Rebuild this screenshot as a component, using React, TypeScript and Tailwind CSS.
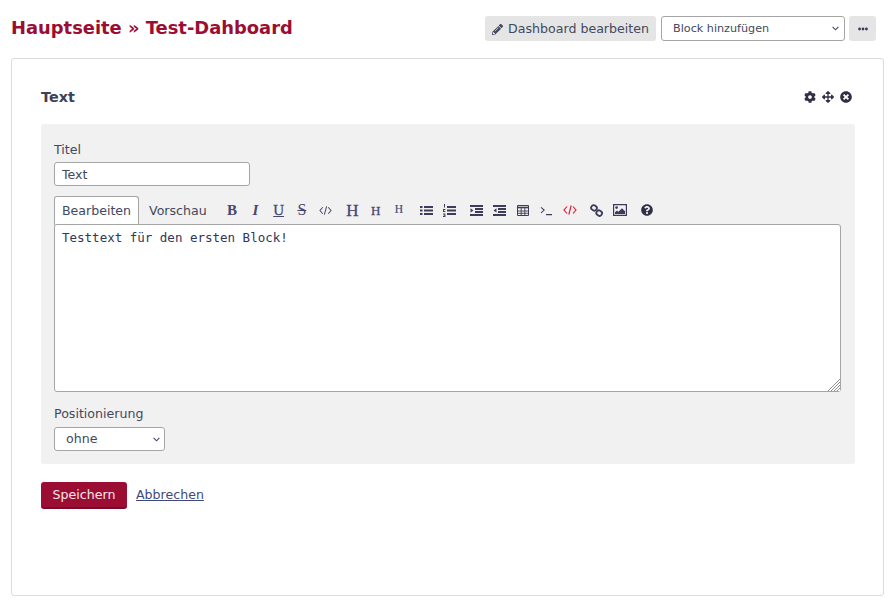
import React from "react";
import { FaCog, FaArrowsAlt, FaTimesCircle, FaEllipsisH, FaPencilAlt, FaQuestionCircle } from "react-icons/fa";

const Cell = ({ children }: { children: React.ReactNode }) => (
  <span className="w-[23.25px] h-[24px] flex items-center justify-center">{children}</span>
);

const Letter = ({ className, children }: { className: string; children: React.ReactNode }) => (
  <span className={`font-['Liberation_Serif',serif] leading-none text-[#474771] ${className}`}>{children}</span>
);

const Chevron = ({ className }: { className: string }) => (
  <svg viewBox="0 0 8 5" className={`absolute pointer-events-none w-[7px] h-[5px] text-[#43495e] ${className}`} fill="none" stroke="currentColor" strokeWidth="1.3">
    <path d="M.7 .7 4 4l3.3-3.3" />
  </svg>
);

const CodeIcon = ({ className }: { className?: string }) => (
  <svg viewBox="0 0 14 12" className={className} fill="none" stroke="currentColor" strokeWidth="1.1">
    <path d="M4 2.5 1 6l3 3.5M10 2.5 13 6l-3 3.5M8.2 1.5 5.8 10.5" />
  </svg>
);

const TerminalIcon = () => (
  <svg viewBox="0 0 14 12" className="w-[13px] h-[11px] text-[#3c3c5a]" fill="none" stroke="currentColor" strokeWidth="1.1">
    <path d="M1 2.5 4.5 5.5 1 8.5M6.5 10.5H13" />
  </svg>
);

const UlIcon = () => (
  <svg viewBox="0 0 13 11" className="w-[13px] h-[11px] text-[#3c3c5a]" fill="currentColor">
    <path d="M0 1h2.5v2H0zM0 4.5h2.5v2H0zM0 8h2.5v2H0zM4 1h9v2H4zM4 4.5h9v2H4zM4 8h9v2H4z" />
  </svg>
);

const OlIcon = () => (
  <svg viewBox="0 0 13 13" className="w-[13px] h-[13px] text-[#3c3c5a]" fill="currentColor">
    <path d="M1 0h1v3.5H1zM0 5h2.4v1H1v1h1.4v1H0zM0 9.5h2.4v3.5H0v-1h1.4v-.4H.6v-.7h.8V10.5H0zM4 2h9v2H4zM4 5.5h9v2H4zM4 9h9v2H4z" />
  </svg>
);

const IndentIcon = ({ flip }: { flip?: boolean }) => (
  <svg viewBox="0 0 13 11" className="w-[13px] h-[11px] text-[#3c3c5a]" fill="currentColor">
    <path d="M0 0h13v2H0zM5 3h8v2H5zM5 6h8v2H5zM0 9h13v2H0z" />
    <path d={flip ? "M3.5 3.2v4.4L0.5 5.4z" : "M0.5 3.2v4.4l3-2.2z"} />
  </svg>
);

const TableIcon = () => (
  <svg viewBox="0 0 12 11" className="w-[12px] h-[11px] text-[#3c3c5a]" fill="none" stroke="currentColor">
    <path d="M.5 .5h11v10H.5z" />
    <path d="M.5 2.5h11" strokeWidth="1.6" />
    <path d="M.5 6h11M.5 8.3h11M4.2 2.5v8M7.8 2.5v8" strokeWidth=".9" />
  </svg>
);

const LinkIcon = () => (
  <svg viewBox="0 0 13 13" className="w-[13px] h-[13px] text-[#3c3c5a]" fill="none" stroke="currentColor" strokeWidth="1.8">
    <rect x="1.2" y="1.4" width="5.6" height="5" rx="2.2" transform="rotate(35 4 3.9)" />
    <rect x="6.4" y="6.6" width="5.6" height="5" rx="2.2" transform="rotate(35 9.2 9.1)" />
  </svg>
);

const ImageIcon = () => (
  <svg viewBox="0 0 14 12" className="w-[14px] h-[12px] text-[#3c3c5a]">
    <path d="M.6 .6h12.8v10.8H.6z" fill="none" stroke="currentColor" strokeWidth="1.2" />
    <circle cx="3.6" cy="3.6" r="1.3" fill="currentColor" />
    <path d="M2 10V8.2l2-1.6 1.4 1.1L9 4.2l3 3V10z" fill="currentColor" />
  </svg>
);

const ResizeGrip = () => (
  <svg viewBox="0 0 12 12" className="absolute right-[1px] bottom-[1px] w-[12px] h-[12px] bg-white pointer-events-none text-[#8f8f8f]" fill="none" stroke="currentColor" strokeWidth="1">
    <path d="M0 12 12 0M3 12l9-9M6 12l6-6M9 12l3-3" />
  </svg>
);

const App = () => {
  return (
    <div className="w-[892px] h-[605px] bg-white overflow-hidden pl-[11px] pr-[8px] pt-[16px] font-['DejaVu_Sans',sans-serif] text-[12.6px] text-[#43495e]">
      <div className="flex items-center justify-between h-[25px] pr-[8px]">
        <h1 className="text-[17.9px] font-bold text-[#9c0d33]">Hauptseite » Test-Dahboard</h1>
        <div className="flex items-center">
          <button className="h-[25px] w-[171px] rounded-[3px] bg-[#e5e5e5] flex items-center justify-center gap-[5px] pt-[1px] text-[12.6px] text-[#43495e]">
            <FaPencilAlt className="w-[11px] h-[11px]" />
            Dashboard bearbeiten
          </button>
          <div className="relative ml-[5px]">
            <select className="appearance-none block h-[25px] w-[184px] rounded-[3px] border border-[#a5a5a5] bg-white pl-[11px] pt-[1px] text-[11.2px] text-[#43495e]">
              <option>Block hinzufügen</option>
            </select>
            <Chevron className="right-[6px] top-[10px]" />
          </div>
          <button className="ml-[4px] h-[25px] w-[27px] rounded-[3px] bg-[#e5e5e5] flex items-center justify-center text-[#3c3c5a]">
            <FaEllipsisH className="w-[10px] h-[10px]" />
          </button>
        </div>
      </div>

      <div className="mt-[17px] w-[873px] h-[538px] rounded-[3px] border border-[#dcdcdc] px-[29px] pt-[29px]">
        <div className="flex items-center justify-between h-[20px] pr-[2px]">
          <h2 className="text-[14.4px] font-bold text-[#3c4257]">Text</h2>
          <div className="flex items-center gap-[6px] text-[#2f2f45] relative -top-[1px]">
            <FaCog className="w-[12px] h-[12px]" />
            <FaArrowsAlt className="w-[12px] h-[12px]" />
            <FaTimesCircle className="w-[12px] h-[12px]" />
          </div>
        </div>

        <div className="mt-[16px] w-[814px] h-[340px] rounded-[3px] bg-[#f1f1f1] pl-[13px] pr-[14px] pt-[18px]">
          <label className="block leading-[16px]">Titel</label>
          <input
            readOnly
            defaultValue="Text"
            className="mt-[4px] block h-[24px] w-[196px] rounded-[3px] border border-[#a5a5a5] bg-white px-[7px] text-[12.6px] text-[#43495e]"
          />

          <div className="mt-[10px] flex items-end h-[28px]">
            <div className="h-[29px] w-[85px] rounded-t-[3px] border border-b-0 border-[#a5a5a5] bg-white flex items-center justify-center relative top-[1px]">
              Bearbeiten
            </div>
            <div className="h-[28px] w-[81.5px] flex items-center pl-[10px] pt-[2px]">Vorschau</div>
            <div className="h-[28px] flex items-center gap-[4px]">
              <div className="flex">
                <Cell><Letter className="text-[15px] font-bold">B</Letter></Cell>
                <Cell><Letter className="text-[15px] font-bold italic">I</Letter></Cell>
                <Cell><Letter className="text-[15px] [-webkit-text-stroke:0.3px] underline">U</Letter></Cell>
                <Cell><Letter className="text-[16px] line-through">S</Letter></Cell>
                <Cell><CodeIcon className="w-[13px] h-[11px] text-[#474771]" /></Cell>
              </div>
              <div className="flex">
                <Cell><Letter className="text-[17px] [-webkit-text-stroke:0.3px]">H</Letter></Cell>
                <Cell><Letter className="text-[13px] [-webkit-text-stroke:0.3px]">H</Letter></Cell>
                <Cell><Letter className="text-[11.5px] [-webkit-text-stroke:0.2px]">H</Letter></Cell>
              </div>
              <div className="flex">
                <Cell><UlIcon /></Cell>
                <Cell><OlIcon /></Cell>
              </div>
              <div className="flex">
                <Cell><IndentIcon /></Cell>
                <Cell><IndentIcon flip /></Cell>
                <Cell><TableIcon /></Cell>
                <Cell><TerminalIcon /></Cell>
                <Cell><CodeIcon className="w-[14px] h-[12px] text-[#e0102f]" /></Cell>
              </div>
              <div className="flex">
                <Cell><LinkIcon /></Cell>
                <Cell><ImageIcon /></Cell>
              </div>
              <Cell><FaQuestionCircle className="w-[12px] h-[12px] text-[#2f2f45]" /></Cell>
            </div>
          </div>

          <div className="relative w-[787px] h-[168px]">
            <textarea
              readOnly
              defaultValue="Testtext für den ersten Block!"
              className="block h-[168px] w-[787px] resize-none rounded-[3px] border border-[#a5a5a5] bg-white px-[7px] py-[5px] font-['DejaVu_Sans_Mono',monospace] text-[12.5px] leading-[16px] text-[#33355a] outline-none"
            />
            <ResizeGrip />
          </div>

          <label className="block mt-[14px] leading-[16px]">Positionierung</label>
          <div className="relative mt-[5px] w-[111px]">
            <select className="appearance-none block h-[24px] w-[111px] rounded-[3px] border border-[#a5a5a5] bg-white pl-[11px] text-[12.6px] text-[#43495e]">
              <option>ohne</option>
            </select>
            <Chevron className="right-[5px] top-[10px]" />
          </div>
        </div>

        <div className="mt-[18px] flex items-center gap-[9px]">
          <button className="h-[27px] w-[86px] rounded-[3px] bg-[#9c0d33] border-b-2 border-[#7a0a28] pt-[2px] text-white/90 text-[12.6px]">
            Speichern
          </button>
          <a href="#" className="text-[#3f4a7a] underline">
            Abbrechen
          </a>
        </div>
      </div>
    </div>
  );
};

export default App;
